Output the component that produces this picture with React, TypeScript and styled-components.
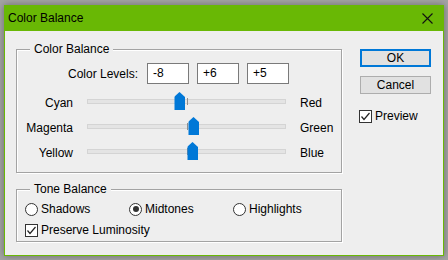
import React from "react";
import styled, { createGlobalStyle } from "styled-components";

const GlobalStyle = createGlobalStyle`
  html, body {
    margin: 0;
    padding: 0;
    background: #a4a4a4;
  }
  body {
    font-family: "Liberation Sans", Arial, sans-serif;
    font-size: 12px;
    color: #000;
  }
`;

const GREEN = "#69b805";

type SliderData = {
    left: string;
    right: string;
    value: number;
};

const sliders: SliderData[] = [
    { left: "Cyan", right: "Red", value: -8 },
    { left: "Magenta", right: "Green", value: 6 },
    { left: "Yellow", right: "Blue", value: 5 },
];

const TRACK_WIDTH = 199;
const THUMB_WIDTH = 11;

// roughly one pixel per level step, zero at the track centre
const thumbLeft = (value: number) => TRACK_WIDTH / 2 + value;

const Check = () => (
    <svg width="11" height="11" viewBox="0 0 11 11">
        <polyline points="1.5,5.5 4,8.5 9.5,2" fill="none" stroke="#222" strokeWidth="1.2"/>
    </svg>
);

export default function App(): React.JSX.Element {
    return (
        <Page>
            <GlobalStyle/>
            <Window>
                <TitleBar>
                    <Title>Color Balance</Title>
                    <svg width="11" height="11" viewBox="0 0 11 11">
                        <path d="M0.5 0.5 L10.5 10.5 M10.5 0.5 L0.5 10.5" stroke="#111" strokeWidth="1.1"/>
                    </svg>
                </TitleBar>
                <Body>
                    <LeftColumn>
                        <GroupBox $height={124}>
                            <Legend>Color Balance</Legend>
                            <LevelsRow>
                                <LevelsLabel>Color Levels:</LevelsLabel>
                                <LevelInput>-8</LevelInput>
                                <LevelInput>+6</LevelInput>
                                <LevelInput>+5</LevelInput>
                            </LevelsRow>
                            <SliderList>
                                {sliders.map((s) => (
                                    <SliderRow key={s.left}>
                                        <SideLabel>{s.left}</SideLabel>
                                        <Track>
                                            <Tick/>
                                            <Thumb style={{ left: thumbLeft(s.value) }}/>
                                        </Track>
                                        <RightLabel>{s.right}</RightLabel>
                                    </SliderRow>
                                ))}
                            </SliderList>
                        </GroupBox>
                        <GroupBox $height={53}>
                            <Legend>Tone Balance</Legend>
                            <RadioRow>
                                <Option>
                                    <Radio $checked={false}/>
                                    <span>Shadows</span>
                                </Option>
                                <Option>
                                    <Radio $checked={true}/>
                                    <span>Midtones</span>
                                </Option>
                                <Option>
                                    <Radio $checked={false}/>
                                    <span>Highlights</span>
                                </Option>
                            </RadioRow>
                            <CheckRow>
                                <Option>
                                    <CheckBox><Check/></CheckBox>
                                    <span>Preserve Luminosity</span>
                                </Option>
                            </CheckRow>
                        </GroupBox>
                    </LeftColumn>
                    <RightColumn>
                        <DialogButton $primary>OK</DialogButton>
                        <DialogButton>Cancel</DialogButton>
                        <PreviewRow>
                            <CheckBox><Check/></CheckBox>
                            <span>Preview</span>
                        </PreviewRow>
                    </RightColumn>
                </Body>
            </Window>
        </Page>
    );
}

const Page = styled.div`
  width: 448px;
  height: 260px;
  box-sizing: border-box;
  padding: 5px 0 0 4px;
`;

const Window = styled.div`
  width: 440px;
  height: 251px;
  box-sizing: border-box;
  border: 1px solid ${GREEN};
  border-top: 0;
  background: #eeeeee;
  display: flex;
  flex-direction: column;
  box-shadow: 0 0 7px rgba(0, 0, 0, 0.35);
`;

const TitleBar = styled.div`
  height: 26px;
  flex: none;
  background: ${GREEN};
  display: flex;
  align-items: center;
  justify-content: space-between;
  margin: 0 -1px;
  padding-left: 4px;
  padding-right: 11px;
`;

const Title = styled.span`
  font-size: 12px;
  color: #000;
`;

const Body = styled.div`
  flex: 1;
  display: flex;
  align-items: flex-start;
  gap: 18px;
  padding: 18px 0 0 11px;
`;

const LeftColumn = styled.div`
  width: 326px;
  display: flex;
  flex-direction: column;
  gap: 16px;
`;

const GroupBox = styled.div<{ $height: number }>`
  position: relative;
  box-sizing: border-box;
  height: ${(p) => p.$height}px;
  border: 1px solid #a3a3a3;
  box-shadow: 1px 1px 0 #ffffff, inset 1px 1px 0 #ffffff;
`;

const Legend = styled.span`
  position: absolute;
  top: -9px;
  left: 13px;
  padding: 0 4px;
  line-height: 16px;
  background: #eeeeee;
`;

const LevelsRow = styled.div`
  display: flex;
  align-items: center;
  gap: 8px;
  height: 21px;
  margin-top: 13px;
`;

const LevelsLabel = styled.span`
  width: 121px;
  margin-right: 1px;
  text-align: right;
`;

const LevelInput = styled.div`
  box-sizing: border-box;
  width: 42px;
  height: 21px;
  padding-left: 5px;
  line-height: 19px;
  background: #ffffff;
  border: 1px solid #7a7a7a;
`;

const SliderList = styled.div`
  margin-top: 6px;
  display: flex;
  flex-direction: column;
`;

const SliderRow = styled.div`
  display: grid;
  grid-template-columns: 56px ${TRACK_WIDTH}px 1fr;
  column-gap: 14px;
  align-items: center;
  height: 25px;
`;

const SideLabel = styled.span`
  text-align: right;
`;

const RightLabel = styled.span`
  text-align: left;
`;

const Track = styled.div`
  position: relative;
  box-sizing: border-box;
  height: 5px;
  margin-top: -2px;
  background: #e4e4e4;
  border: 1px solid #d4d4d4;
`;

const Tick = styled.div`
  position: absolute;
  left: 99px;
  top: -2px;
  width: 1px;
  height: 7px;
  background: #8f8f8f;
`;

const Thumb = styled.div`
  position: absolute;
  top: -8px;
  width: ${THUMB_WIDTH}px;
  height: 18px;
  transform: translateX(-50%);
  background: #0078d7;
  clip-path: polygon(50% 0, 100% 5px, 100% 100%, 0 100%, 0 5px);
`;

const RadioRow = styled.div`
  display: grid;
  grid-template-columns: repeat(3, 104px);
  padding-left: 8px;
  margin-top: 11px;
  height: 16px;
`;

const CheckRow = styled.div`
  padding-left: 8px;
  margin-top: 5px;
  height: 16px;
`;

const Option = styled.label`
  display: flex;
  align-items: center;
  gap: 3px;
  height: 16px;
`;

const Radio = styled.span<{ $checked: boolean }>`
  box-sizing: border-box;
  width: 13px;
  height: 13px;
  border-radius: 50%;
  border: 1px solid #333333;
  background: #ffffff;
  display: flex;
  align-items: center;
  justify-content: center;
  &::after {
    content: "";
    width: 6px;
    height: 6px;
    border-radius: 50%;
    background: #333333;
    display: ${(p) => (p.$checked ? "block" : "none")};
  }
`;

const CheckBox = styled.span`
  box-sizing: border-box;
  width: 13px;
  height: 13px;
  border: 1px solid #333333;
  background: #ffffff;
  display: flex;
  align-items: center;
  justify-content: center;
`;

const RightColumn = styled.div`
  width: 71px;
  display: flex;
  flex-direction: column;
  gap: 9px;
`;

const DialogButton = styled.div<{ $primary?: boolean }>`
  box-sizing: border-box;
  height: 18px;
  display: flex;
  align-items: center;
  justify-content: center;
  background: #e1e1e1;
  border: ${(p) => (p.$primary ? "2px solid #0078d7" : "1px solid #adadad")};
`;

const PreviewRow = styled.div`
  display: flex;
  align-items: center;
  gap: 3px;
  margin-top: 5px;
  margin-left: -1px;
  height: 16px;
`;
